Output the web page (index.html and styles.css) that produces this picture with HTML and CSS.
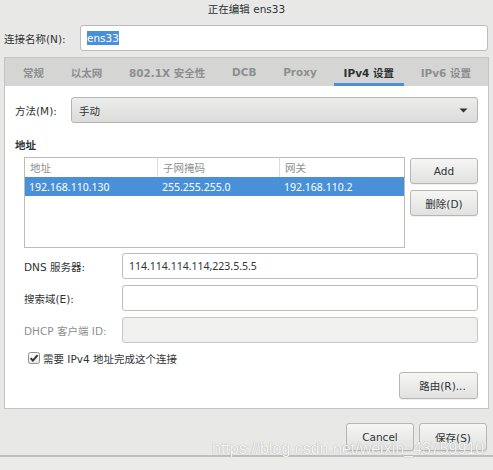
FILE: index.html
```html
<!DOCTYPE html>
<html lang="zh">
<head>
<meta charset="utf-8">
<title>正在编辑 ens33</title>
<link rel="stylesheet" href="styles.css">
</head>
<body>
<div class="window">
  <div class="titlebar">正在编辑 ens33</div>

  <div class="name-row">
    <label class="name-label">连接名称(N):</label>
    <div class="input name-input"><span class="sel">ens33</span></div>
  </div>

  <div class="notebook">
    <div class="tabs">
      <div class="tab">常规</div>
      <div class="tab">以太网</div>
      <div class="tab">802.1X 安全性</div>
      <div class="tab">DCB</div>
      <div class="tab">Proxy</div>
      <div class="tab active">IPv4 设置</div>
      <div class="tab">IPv6 设置</div>
    </div>

    <div class="panel">
      <div class="method-row">
        <label class="method-label">方法(M):</label>
        <div class="combo">
          <span>手动</span>
          <svg class="arrow" width="9" height="5" viewBox="0 0 9 5"><path d="M0.5 0.5 H8.5 L4.5 4.5 Z" fill="#2e3436"/></svg>
        </div>
      </div>

      <div class="section-title">地址</div>

      <div class="addr">
        <div class="table">
          <div class="thead">
            <div class="th c1">地址</div>
            <div class="th c2">子网掩码</div>
            <div class="th c3">网关</div>
          </div>
          <div class="row selected">
            <div class="td c1">192.168.110.130</div>
            <div class="td c2">255.255.255.0</div>
            <div class="td c3">192.168.110.2</div>
          </div>
        </div>
        <div class="side-buttons">
          <div class="btn">Add</div>
          <div class="btn">删除(D)</div>
        </div>
      </div>

      <div class="form">
        <div class="form-row">
          <label class="form-label">DNS 服务器:</label>
          <div class="input entry">114.114.114.114,223.5.5.5</div>
        </div>
        <div class="form-row">
          <label class="form-label">搜索域(E):</label>
          <div class="input entry"></div>
        </div>
        <div class="form-row">
          <label class="form-label disabled">DHCP 客户端 ID:</label>
          <div class="input entry insensitive"></div>
        </div>
      </div>

      <div class="check-row">
        <svg class="check" width="12" height="12" viewBox="0 0 12 12">
          <defs>
            <linearGradient id="cb" x1="0" y1="0" x2="0" y2="1">
              <stop offset="0" stop-color="#ffffff"/>
              <stop offset="1" stop-color="#e6e6e6"/>
            </linearGradient>
          </defs>
          <rect x="0.5" y="0.5" width="11" height="11" rx="2" fill="url(#cb)" stroke="#8e9192"/>
          <path d="M2.6 6.1 L4.9 8.6 L9.6 3.2" fill="none" stroke="#2e3436" stroke-width="2"/>
        </svg>
        <span>需要 IPv4 地址完成这个连接</span>
      </div>

      <div class="route-row">
        <div class="btn route">路由(R)...</div>
      </div>
    </div>
  </div>

  <div class="actions">
    <div class="btn action">Cancel</div>
    <div class="btn action">保存(S)</div>
  </div>
  <div class="footer"></div>

  <div class="watermark">https://blog.csdn.net/weixin_43759910</div>
</div>
</body>
</html>
```

FILE: styles.css
```css
html, body {
  margin: 0;
  padding: 0;
}

body {
  width: 493px;
  height: 470px;
  overflow: hidden;
  background: #e8e8e7;
  font-family: "DejaVu Sans", "Noto Sans CJK SC", sans-serif;
  font-size: 10.5px;
  color: #2e3436;
}

.window {
  position: relative;
  width: 493px;
  height: 470px;
}

.titlebar {
  height: 17px;
  line-height: 18px;
  text-align: center;
  color: #2e3436;
}

.name-row {
  display: flex;
  align-items: center;
  margin-top: 8px;
  padding: 0 5px 0 4px;
  height: 26px;
}

.name-label {
  width: 76px;
  flex: none;
}

.input {
  box-sizing: border-box;
  height: 26px;
  border: 1px solid #bcbcb9;
  border-radius: 3px;
  background: #ffffff;
  display: flex;
  align-items: center;
}

.name-input {
  flex: 1;
  padding-left: 6px;
}

.sel {
  background: #4a90d9;
  color: #ffffff;
  line-height: 14px;
}

.notebook {
  margin: 6px 4px 0;
}

.tabs {
  box-sizing: border-box;
  height: 29px;
  display: flex;
  align-items: stretch;
  gap: 6.7px;
  padding-left: 8px;
  background: #d5d5d4;
  border: 1px solid #c3c3c0;
  border-bottom: none;
}

.tab {
  padding: 0 10px;
  display: flex;
  align-items: center;
  font-weight: bold;
  color: #8d8f8f;
}

.tab.active {
  color: #2e3436;
  box-shadow: inset 0 -3px 0 #4a90d9;
}

.panel {
  box-sizing: border-box;
  height: 323px;
  background: #ffffff;
  border: 1px solid #c3c3c0;
  border-top: none;
  padding: 11px 10px 0 10px;
}

.method-row {
  display: flex;
  align-items: center;
  height: 26px;
}

.method-label {
  width: 56px;
  flex: none;
}

.combo {
  flex: 1;
  box-sizing: border-box;
  height: 26px;
  border: 1px solid #b4b4b1;
  border-radius: 3px;
  background: linear-gradient(#ececeb, #dcdcdb);
  display: flex;
  align-items: center;
  justify-content: space-between;
  padding: 0 9px 0 7px;
}

.arrow {
  display: block;
}

.section-title {
  margin-top: 15px;
  line-height: 14px;
  height: 14px;
  font-weight: bold;
}

.addr {
  display: flex;
  margin-top: 5px;
  padding-left: 9px;
}

.table {
  box-sizing: border-box;
  width: 381px;
  height: 91px;
  border: 1px solid #bcbcb9;
  background: #ffffff;
}

.thead, .row {
  display: flex;
}

.thead {
  height: 19px;
}

.row {
  height: 19px;
}

.c1 { width: 133px; }
.c2 { width: 122px; }
.c3 { flex: 1; }

.th {
  box-sizing: border-box;
  color: #8d8f8f;
  padding-left: 5px;
  display: flex;
  align-items: center;
  border-right: 1px solid #dcdcdb;
}

.th.c3 {
  border-right: none;
}

.td {
  box-sizing: border-box;
  padding-left: 4px;
  display: flex;
  align-items: center;
  font-family: "Noto Sans", "DejaVu Sans", sans-serif;
  font-size: 10.5px;
}

.row.selected {
  background: #4a90d9;
  color: #ffffff;
}

.side-buttons {
  margin-left: 5px;
  width: 68px;
  display: flex;
  flex-direction: column;
  gap: 6px;
  padding-top: 1px;
}

.btn {
  box-sizing: border-box;
  height: 26px;
  border: 1px solid #b6b6b3;
  border-radius: 3px;
  background: linear-gradient(#f6f6f5, #e1e1e0);
  box-shadow: 0 1px 0 rgba(0, 0, 0, 0.06);
  display: flex;
  align-items: center;
  justify-content: center;
  color: #2e3436;
}

.form {
  margin-top: 5px;
  padding-left: 9px;
  display: flex;
  flex-direction: column;
  gap: 6px;
}

.form-row {
  display: flex;
  align-items: center;
  height: 26px;
}

.form-label {
  width: 98px;
  flex: none;
}

.form-label.disabled {
  color: #8d8f8f;
}

.entry {
  flex: 1;
  padding-left: 6px;
  font-family: "Noto Sans", "DejaVu Sans", sans-serif;
}

.entry.insensitive {
  background: #f0f0ef;
  border-color: #c6c6c3;
}

.check-row {
  display: flex;
  align-items: center;
  margin-top: 8px;
  padding-left: 13px;
  height: 14px;
  gap: 3px;
}

.check {
  display: block;
  flex: none;
}

.route-row {
  display: flex;
  justify-content: flex-end;
  margin-top: 7px;
}

.btn.route {
  width: 79px;
  height: 27px;
  padding-left: 8px;
}

.actions {
  display: flex;
  justify-content: flex-end;
  gap: 5px;
  padding-right: 6px;
  margin-top: 14px;
}

.btn.action {
  width: 68px;
  height: 28px;
}

.footer {
  margin-top: 4px;
  height: 13px;
  border-top: 2px solid #bebebc;
  background: #ebebea;
}

.watermark {
  position: absolute;
  left: 212px;
  top: 441px;
  font-family: "Liberation Sans", Arial, sans-serif;
  font-size: 16px;
  line-height: 16px;
  color: rgba(255, 255, 255, 0.92);
  text-shadow: 0 0 1px rgba(110, 110, 110, 0.7);
  white-space: nowrap;
}
```
